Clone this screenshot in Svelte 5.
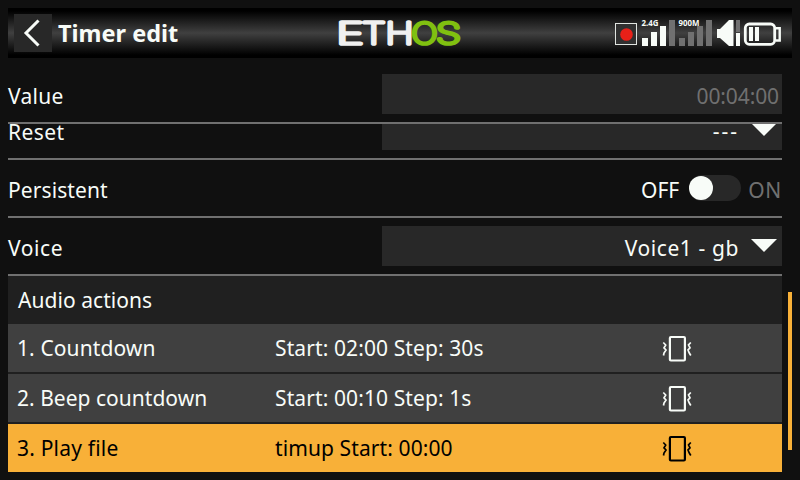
<script>
  const actions = [
    { name: '1. Countdown', detail: 'Start: 02:00 Step: 30s', ns: 0.1, ds: 0.1 },
    { name: '2. Beep countdown', detail: 'Start: 00:10 Step: 1s', ns: 0.02, ds: 0.1 },
    { name: '3. Play file', detail: 'timup Start: 00:00', ns: 0.2, ds: 0.1, active: true }
  ];
</script>

{#snippet caret()}
  <svg class="caret" width="26" height="13" viewBox="0 0 26 13"><path d="M0 0H26L13 13Z" fill="#f8fcf8" /></svg>
{/snippet}

<div class="screen">
  <header>
    <div class="back">
      <svg width="38" height="38" viewBox="0 0 38 38"><path d="M24.5 6.5L12 19L24.5 31.5" fill="none" stroke="#f8fcf8" stroke-width="3" /></svg>
    </div>
    <h1>Timer edit</h1>
    <svg class="logo" width="130" height="40" viewBox="0 0 130 40">
      <g fill="#f0f0f0" stroke="#f0f0f0">
        <text x="3.5" y="31" textLength="27" lengthAdjust="spacingAndGlyphs">E</text>
        <text x="29" y="31" textLength="23.5" lengthAdjust="spacingAndGlyphs">T</text>
        <text x="52.5" y="31" textLength="28" lengthAdjust="spacingAndGlyphs">H</text>
      </g>
      <g fill="#80c010" stroke="#80c010">
        <text x="78.5" y="31" textLength="26" lengthAdjust="spacingAndGlyphs">O</text>
        <text x="103" y="31" textLength="25" lengthAdjust="spacingAndGlyphs">S</text>
      </g>
    </svg>
    <svg class="status" width="170" height="32" viewBox="614 17 170 32">
      <rect x="615.5" y="23.5" width="21" height="21" fill="#303030" stroke="#e0e4e0" />
      <circle cx="626.5" cy="34.5" r="6.3" fill="#e82018" />
      <g fill="#f8fcf8">
        <rect x="642" y="38" width="6" height="8" /><rect x="651" y="32" width="6" height="14" /><rect x="660" y="26" width="6" height="20" />
      </g>
      <g fill="#707070">
        <rect x="669" y="20" width="6" height="26" /><rect x="679" y="38" width="6" height="8" /><rect x="688" y="32" width="6" height="14" /><rect x="697" y="26" width="6" height="20" /><rect x="706" y="20" width="6" height="26" />
        <rect x="736" y="20" width="4" height="12" />
      </g>
      <g font-family="'Noto Sans', sans-serif" font-size="8.5" font-weight="700" fill="#f8fcf8">
        <text x="641.5" y="26.3" textLength="17" lengthAdjust="spacingAndGlyphs">2.4G</text>
        <text x="678.5" y="26.3" textLength="21" lengthAdjust="spacingAndGlyphs">900M</text>
      </g>
      <path d="M717 29H720L729 20H733.5V46H729L720 38H717Z" fill="#f8fcf8" />
      <rect x="736" y="33" width="4" height="13" fill="#f8fcf8" />
      <rect x="745.3" y="24" width="29.4" height="20.3" rx="4" fill="none" stroke="#f8fcf8" stroke-width="2.8" />
      <path d="M776 28.3H779.7V40.5H776" fill="none" stroke="#f8fcf8" stroke-width="2.4" />
      <path d="M749 27H753V41H749ZM755 27H759V41H755Z" fill="#f8fcf8" />
    </svg>
  </header>

  <main>
    <div class="row">
      <span class="label" style:letter-spacing="0.3px">Value</span>
      <div class="field dim"><span class="time">00:04:00</span></div>
    </div>
    <div class="row clipped">
      <div class="inner">
        <span class="label" style:letter-spacing="0.4px">Reset</span>
        <div class="field select"><span class="dashes">---</span>{@render caret()}</div>
      </div>
    </div>
    <div class="row">
      <span class="label" style:letter-spacing="0.1px">Persistent</span>
      <div class="toggle">
        <span>OFF</span>
        <i><b></b></i>
        <span class="on">ON</span>
      </div>
    </div>
    <div class="row">
      <span class="label" style:letter-spacing="0.6px">Voice</span>
      <div class="field select"><span class="voice">Voice1 - gb</span>{@render caret()}</div>
    </div>
    <section>
      <h2>Audio actions</h2>
      {#each actions as a}
        <div class="action" class:active={a.active}>
          <span class="name" style:letter-spacing="{a.ns}px">{a.name}</span>
          <span class="detail" style:letter-spacing="{a.ds}px">{a.detail}</span>
          <svg width="32" height="28" viewBox="0 0 32 28" fill="none" stroke="currentColor">
            <rect x="8.9" y="3" width="15" height="23.5" rx="1" stroke-width="2.2" />
            <path d="M2.3 8.5L4.7 11L3 13.8L5 16L3 19L2.5 21.5M29.8 8.5L27.5 11L29 13.8L27 16L28.3 19L29.8 21.5" stroke-width="1.7" />
          </svg>
        </div>
      {/each}
    </section>
  </main>
  <div class="scroll"></div>
</div>

<style>
  :global(body) { margin: 0; background: #101010; }
  .screen {
    position: relative; box-sizing: border-box; width: 800px; height: 480px; padding: 8px 8px 0;
    overflow: hidden; background: #101010; color: #f8fcf8;
    font: 21px/28px 'Noto Sans', sans-serif;
  }
  header {
    display: flex; align-items: center; height: 50px; box-sizing: border-box; padding-left: 6px;
    background: linear-gradient(#000, #000 6%, #404040 50%, #000 94%, #000);
  }
  .back { width: 38px; height: 38px; background: #282828; }
  svg { display: block; flex: none; }
  h1 { margin: 0 0 0 6px; width: 121px; font-size: 23.5px; line-height: 30px; font-weight: 700; white-space: nowrap; }
  .logo { margin-left: 154px; }
  .logo text {
    font-family: Inter, sans-serif; font-size: 29px; font-weight: 100;
    stroke-width: 3.6px; stroke-linejoin: round; vector-effect: non-scaling-stroke;
  }
  .status { margin-left: 151px; }
  main { width: 774px; padding-top: 8px; }
  .row { display: flex; align-items: center; justify-content: space-between; box-sizing: border-box; height: 58px; border-bottom: 2px solid #707070; }
  .row.clipped { height: 36px; overflow: hidden; align-items: flex-end; }
  .inner { display: flex; flex: 1; align-items: center; justify-content: space-between; height: 56px; }
  .label { padding-top: 3px; }
  .field { display: flex; align-items: center; justify-content: flex-end; box-sizing: border-box; width: 400px; height: 40px; padding: 3px 3px 0 0; background: #282828; }
  .field.select { padding-right: 5px; }
  .caret { margin: -5px 0 0 12px; }
  .dim, .on { color: #707070; }
  .time { letter-spacing: -.1px; }
  .voice { letter-spacing: .6px; }
  .dashes { letter-spacing: 2px; padding-bottom: 2px; }
  .toggle { display: flex; align-items: center; padding-top: 3px; }
  .toggle i { width: 52px; height: 26px; margin: -4px 7px 0 10px; border-radius: 13px; background: #282828; }
  .on { letter-spacing: .7px; }
  .toggle b { display: block; width: 24px; height: 24px; margin: 1px 0 0; border-radius: 50%; background: #f8fcf8; }
  section { background: #202020; }
  h2 { margin: 0; padding: 10px 10px 10px; height: 28px; font: inherit; letter-spacing: .05px; }
  .action { display: flex; align-items: center; height: 48px; margin-bottom: 2px; background: #404040; }
  .action:last-child { margin-bottom: 0; }
  .action.active { background: #f8b038; color: #000; }
  .name { width: 258px; padding-left: 9px; box-sizing: content-box; }
  .detail { width: 386px; }
  .scroll { position: absolute; left: 788px; top: 292px; width: 4px; height: 158px; background: #f8b038; }
</style>
